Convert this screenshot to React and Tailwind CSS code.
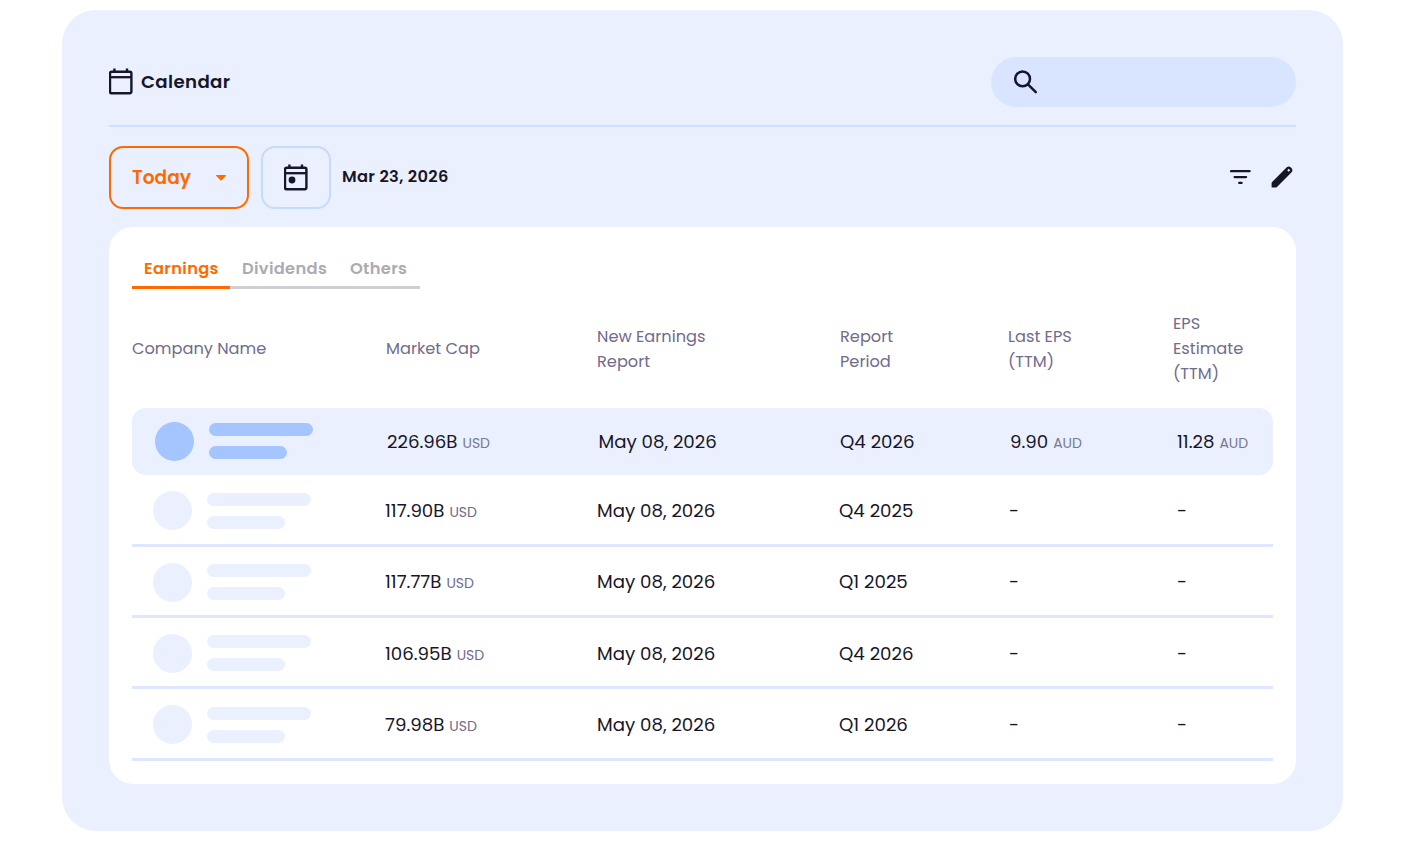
import React from 'react';

const columns = [
  { lines: ["Company Name"], offset: "" },
  { lines: ["Market Cap"], offset: "pl-px" },
  { lines: ["New Earnings", "Report"], offset: "" },
  { lines: ["Report", "Period"], offset: "pl-px" },
  { lines: ["Last EPS", "(TTM)"], offset: "pl-px" },
  { lines: ["EPS", "Estimate", "(TTM)"], offset: "-ml-0.5" },
];

const rows = [
  { cap: "117.90B", date: "May 08, 2026", period: "Q4 2025" },
  { cap: "117.77B", date: "May 08, 2026", period: "Q1 2025" },
  { cap: "106.95B", date: "May 08, 2026", period: "Q4 2026" },
  { cap: "79.98B", date: "May 08, 2026", period: "Q1 2026" },
];

const grid = "grid grid-cols-[253px_212px_242px_168px_168px_98px] items-center whitespace-nowrap";

function CalendarIcon ({ dot }) {
  return (
    <svg className="w-6 h-[27px] shrink-0" viewBox="0 0 24 27" fill="none" stroke="currentColor">
      <rect x="1" y="3.8" width="21.4" height="21.4" rx="1.6" strokeWidth="2.4"/>
      <path d="M1 9.2H23" strokeWidth="2.3"/>
      <path d="M5.4 .6V4M18 .6V4" strokeWidth="2.4"/>
      {dot && <circle cx="8" cy="16" r="3.4" fill="currentColor" stroke="none"/>}
    </svg>
  );
}

function SearchIcon () {
  return (
    <svg className="w-6 h-6" viewBox="0 0 24 24" fill="none" stroke="currentColor" strokeWidth="2.5" strokeLinecap="round">
      <circle cx="8.6" cy="8.9" r="7.4"/>
      <path d="M14.2 14.6L21.8 22.2"/>
    </svg>
  );
}

function FilterIcon () {
  return (
    <svg className="w-[21px] h-4" viewBox="0 0 21 16" fill="none" stroke="currentColor" strokeWidth="2.3" strokeLinecap="round">
      <path d="M1.1 2.2H19.6M4.6 8.1H16.1M9.2 13.9H11.6"/>
    </svg>
  );
}

function PencilIcon () {
  return (
    <svg className="w-[22px] h-[22px]" viewBox="0 0 22 22" fill="currentColor">
      <path fillRule="evenodd" d="M1.3 21.6Q.6 21.6.6 20.9V17.1Q.6 16.5 1.1 16L15.5 1.6Q17.7-.4 19.9 1.5L20.4 2Q22.4 4.2 20.4 6.5L6 21Q5.4 21.6 4.8 21.6ZM17.7 2.7L16.2 4.2L17.7 5.7L19.2 4.2Z"/>
    </svg>
  );
}

function Company ({ active }) {
  const fill = active ? "bg-[#a4c5ff]" : "bg-[#ebf0ff]";
  return (
    <div className={active ? "flex items-center pl-[23px]" : "flex items-center pl-[21px]"}>
      <div className={`w-[39px] h-[39px] rounded-full ${fill}`}></div>
      <div className={active ? "flex flex-col gap-2.5 ml-[15px] mb-px" : "flex flex-col gap-2.5 ml-[15px]"}>
        <div className={`w-[104px] h-[13px] rounded-full ${fill}`}></div>
        <div className={`w-[78px] h-[13px] rounded-full ${fill}`}></div>
      </div>
    </div>
  );
}

function Amount ({ value, unit, unitColor }) {
  return (
    <div className="flex items-baseline gap-[5px]">
      <span>{value}</span>
      <span className={`text-[14px] ${unitColor}`}>{unit}</span>
    </div>
  );
}

export default function App () {
  return (
    <div className="w-[1405px] h-[841px] bg-white pt-2.5 pl-[62px] overflow-hidden font-[Poppins,Inter,'Open_Sans',sans-serif] text-[#171629]">
      <div className="w-[1281px] h-[820.5px] bg-[#ebf0ff] rounded-[34px] px-[47px] pt-[46px]">
        {/* Heading */}
        <div className="flex items-start justify-between h-[71px] border-b-2 border-[#cee0ff]">
          <div className="flex items-center h-[51px]">
            <CalendarIcon/>
            <span className="ml-2 text-[18.2px] font-semibold tracking-[0.36px]">Calendar</span>
          </div>
          <div className="flex items-center w-[305px] h-[50px] mt-px pl-[23px] rounded-full bg-[#d9e4ff]">
            <SearchIcon/>
          </div>
        </div>
        {/* Toolbar */}
        <div className="flex items-center mt-[18px] h-16">
          <button className="flex items-center justify-between w-[140px] h-[63px] mt-px pl-[21px] pr-[21px] border-2 border-[#ff6a00] rounded-[14px] text-[#ff6a00]">
            <span className="pt-px text-[18.6px] font-semibold">Today</span>
            <svg className="w-2.5 h-1.5" viewBox="0 0 10 6" fill="currentColor">
              <path d="M.6 0H9.4Q10.4.2 9.7 1L5.6 5.3Q5 5.8 4.4 5.3L.3 1Q-.4.2.6 0Z"/>
            </svg>
          </button>
          <button className="flex items-center justify-center w-[70px] h-[63px] mt-px ml-3 border-2 border-[#c5daff] rounded-[14px]">
            <CalendarIcon dot/>
          </button>
          <span className="ml-[11px] text-[16.3px] font-semibold tracking-[0.32px]">Mar 23, 2026</span>
          <div className="flex items-center gap-5 ml-auto mr-[3px]">
            <FilterIcon/>
            <PencilIcon/>
          </div>
        </div>
        {/* Table */}
        <div className="mt-[18px] h-[557px] bg-white rounded-[24px] px-[23px] pt-[26px]">
          <div className="flex w-[288px] h-9 text-[16.3px] leading-8 font-semibold tracking-[0.32px] text-[#ababb1]">
            <div className="w-[98px] pl-3 border-b-3 border-[#ff6a00] text-[#ff6a00]">Earnings</div>
            <div className="w-[108px] pl-3 border-b-3 border-[#d0ced5]">Dividends</div>
            <div className="w-[82px] pl-3 border-b-3 border-[#d0ced5]">Others</div>
          </div>
          <div className={`${grid} h-[119px] text-[16.2px] leading-[25px] text-[#716b8c]`}>
            {columns.map((column, i) => (
              <div key={i} className={column.offset}>
                {column.lines.map((line) => <div key={line}>{line}</div>)}
              </div>
            ))}
          </div>
          <div className={`${grid} h-[67px] mb-[0.5px] rounded-[14px] bg-[#ebf0ff] text-[18.2px]`}>
            <Company active/>
            <div className="pl-[2px]">
              <Amount value="226.96B" unit="USD" unitColor="text-[#777a92]"/>
            </div>
            <div className="pl-[1.5px]">May 08, 2026</div>
            <div className="pl-px">Q4 2026</div>
            <div className="pl-[3px]">
              <Amount value="9.90" unit="AUD" unitColor="text-[#777a92]"/>
            </div>
            <div className="pl-[2px]">
              <Amount value="11.28" unit="AUD" unitColor="text-[#777a92]"/>
            </div>
          </div>
          {rows.map((row) => (
            <div key={row.cap} className={`${grid} h-[71.3px] pt-[2.2px] border-b-3 border-[#dee7ff] text-[18.2px]`}>
              <Company/>
              <Amount value={row.cap} unit="USD" unitColor="text-[#716b8c]"/>
              <div>{row.date}</div>
              <div>{row.period}</div>
              <div className="pl-0.5">-</div>
              <div className="pl-0.5">-</div>
            </div>
          ))}
        </div>
      </div>
    </div>
  );
}
